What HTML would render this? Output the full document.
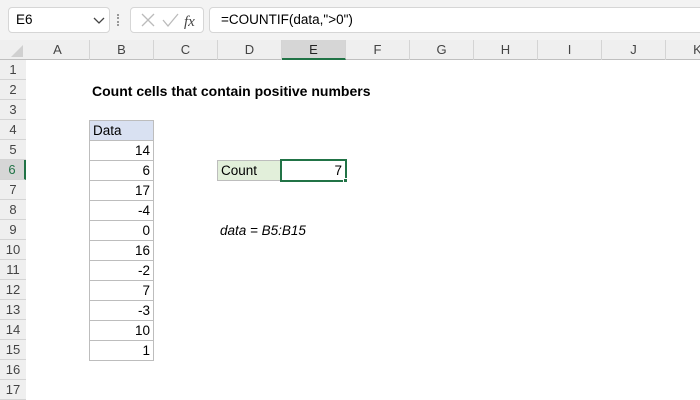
<!DOCTYPE html>
<html><head><style>
body{margin:0;width:700px;height:400px;overflow:hidden;background:#fff;font-family:"Liberation Sans",sans-serif;position:relative}
.a{position:absolute;box-sizing:border-box}
.ch{position:absolute;top:40px;height:20px;border-right:1px solid #d4d4d4;font-size:13px;color:#444;text-align:center;line-height:20px;box-sizing:border-box}
.rh{position:absolute;left:0;width:26px;height:20px;border-bottom:1px solid #d4d4d4;font-size:13px;color:#444;text-align:center;line-height:20px;box-sizing:border-box;background:#efefef}
.c{position:absolute;left:89px;width:65px;height:21px;border:1px solid #bdbdbd;font-size:13.5px;text-align:right;padding-right:3px;line-height:19px;box-sizing:border-box}
</style></head><body>
<div class="a" style="left:0;top:0;width:700px;height:40px;background:#f3f3f3"></div>
<div class="a" style="left:8px;top:7px;width:102px;height:26px;background:#fff;border:1px solid #d6d6d6;border-radius:4px;font-size:13.5px;line-height:24px;padding-left:7px">E6</div>
<svg class="a" style="left:93px;top:17px" width="12" height="8"><path d="M1 1l5 5 5-5" stroke="#444" stroke-width="1.3" fill="none"/></svg>
<div class="a" style="left:117px;top:14px;width:2px;height:12px;border-left:2px dotted #999"></div>
<div class="a" style="left:130px;top:7px;width:74px;height:26px;background:#fff;border:1px solid #d6d6d6;border-radius:4px"></div>
<svg class="a" style="left:130px;top:7px" width="74" height="26"><path d="M12 7l12 12M24 7L12 19" stroke="#bbb" stroke-width="1.3" fill="none"/><path d="M33 13l5 6 10-12" stroke="#bbb" stroke-width="1.3" fill="none"/><text x="54" y="19" font-family="Liberation Serif" font-style="italic" font-size="15" fill="#444">fx</text></svg>
<div class="a" style="left:209px;top:7px;width:495px;height:26px;background:#fff;border:1px solid #d6d6d6;border-radius:4px;font-size:13.5px;line-height:24px;padding-left:11px">=COUNTIF(data,"&gt;0")</div>
<div class="a" style="left:0;top:40px;width:700px;height:20px;background:#efefef;border-bottom:1px solid #bfbfbf"></div>
<svg class="a" style="left:10px;top:44px" width="14" height="14"><path d="M13 1V13H1Z" fill="#d0d0d0"/></svg>
<div class="ch" style="left:26px;width:64px">A</div>
<div class="ch" style="left:90px;width:64px">B</div>
<div class="ch" style="left:154px;width:64px">C</div>
<div class="ch" style="left:218px;width:64px">D</div>
<div class="ch" style="left:282px;width:64px;background:#d6d6d6;border-bottom:2px solid #217346;color:#222">E</div>
<div class="ch" style="left:346px;width:64px">F</div>
<div class="ch" style="left:410px;width:64px">G</div>
<div class="ch" style="left:474px;width:64px">H</div>
<div class="ch" style="left:538px;width:64px">I</div>
<div class="ch" style="left:602px;width:64px">J</div>
<div class="ch" style="left:666px;width:64px">K</div>
<div class="a" style="left:25px;top:60px;width:1px;height:340px;background:#bfbfbf"></div>
<div class="rh" style="top:60px">1</div><div class="rh" style="top:80px">2</div><div class="rh" style="top:100px">3</div><div class="rh" style="top:120px">4</div><div class="rh" style="top:140px">5</div>
<div class="rh" style="top:160px;background:#d6d6d6;border-right:2px solid #217346;color:#217346">6</div>
<div class="rh" style="top:180px">7</div><div class="rh" style="top:200px">8</div><div class="rh" style="top:220px">9</div><div class="rh" style="top:240px">10</div><div class="rh" style="top:260px">11</div><div class="rh" style="top:280px">12</div><div class="rh" style="top:300px">13</div><div class="rh" style="top:320px">14</div><div class="rh" style="top:340px">15</div><div class="rh" style="top:360px">16</div><div class="rh" style="top:380px">17</div>
<div class="a" style="left:92px;top:81px;font-size:14px;font-weight:bold;line-height:20px">Count cells that contain positive numbers</div>
<div class="c" style="top:120px;background:#d9e1f2;text-align:left;padding-left:3px">Data</div>
<div class="c" style="top:140px">14</div><div class="c" style="top:160px">6</div><div class="c" style="top:180px">17</div><div class="c" style="top:200px">-4</div><div class="c" style="top:220px">0</div><div class="c" style="top:240px">16</div><div class="c" style="top:260px">-2</div><div class="c" style="top:280px">7</div><div class="c" style="top:300px">-3</div><div class="c" style="top:320px">10</div><div class="c" style="top:340px">1</div>
<div class="c" style="left:217px;top:160px;background:#e2efda;text-align:left;padding-left:3px">Count</div>
<div class="a" style="left:280px;top:159px;width:67px;height:23px;border:2px solid #217346;font-size:13.5px;text-align:right;padding-right:3px;line-height:19px;background:#fff">7</div>
<div class="a" style="left:343px;top:178px;width:5px;height:5px;background:#217346;border:1px solid #fff"></div>
<div class="a" style="left:220px;top:221px;font-size:13.5px;font-style:italic;line-height:20px">data = B5:B15</div>
</body></html>
